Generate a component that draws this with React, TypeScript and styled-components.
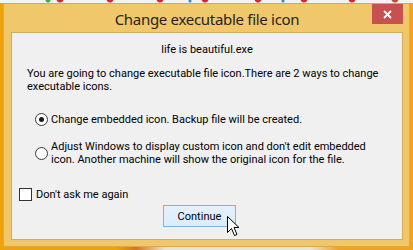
import React from "react";
import styled, { createGlobalStyle } from "styled-components";

const Global = createGlobalStyle`
  html, body { margin: 0; padding: 0; }
  body { width: 413px; height: 250px; overflow: hidden; }
`;

const Desktop = styled.div`
  width: 413px;
  height: 250px;
  box-sizing: border-box;
  padding: 3px 3px 3px 3px;
  background:
    radial-gradient(circle at 60px -1px, #d9262c 0 3px, transparent 4px),
    radial-gradient(circle at 48px 0px, #3fae3a 0 2px, transparent 3px),
    radial-gradient(circle at 110px -1px, #d9262c 0 3px, transparent 4px),
    radial-gradient(circle at 160px -1px, #d9262c 0 3px, transparent 4px),
    radial-gradient(circle at 190px 1px, #2a8be0 0 1px, transparent 2px),
    radial-gradient(circle at 205px -1px, #d9262c 0 3px, transparent 4px),
    radial-gradient(circle at 258px -1px, #d9262c 0 3px, transparent 4px),
    radial-gradient(circle at 283px 1px, #2a8be0 0 1px, transparent 2px),
    radial-gradient(circle at 304px -1px, #d9262c 0 3px, transparent 4px),
    radial-gradient(circle at 352px -1px, #d9262c 0 3px, transparent 4px),
    radial-gradient(circle at 395px -1px, #b5532a 0 3px, transparent 4px),
    linear-gradient(to bottom, #f3f3f3 0 3px, transparent 3px),
    linear-gradient(to right, #efa20a 0 28%, #d8761a 33%, #ece2d2 40%, #ebe3d6 75%, #f2a21b 82%, #f2a21b 100%);
  display: flex;
`;

const Window = styled.div`
  flex: 1;
  display: flex;
  flex-direction: column;
  background: #f0c86b;
  border: 1px solid #dca84a;
  padding: 0 6px 6px 7px;
`;

const TitleBar = styled.div`
  position: relative;
  flex: none;
  height: 28px;
  display: flex;
  align-items: center;
  justify-content: center;
`;

const Title = styled.div`
  font-family: "Noto Sans", "Open Sans", sans-serif;
  font-size: 15px;
  color: #1f1f1f;
  margin-top: 1px;
  letter-spacing: -0.3px;
`;

const CloseButton = styled.div`
  position: absolute;
  right: 0;
  top: 0;
  width: 31px;
  height: 20px;
  background: #c75050;
  display: flex;
  align-items: center;
  justify-content: center;
`;

const Client = styled.div`
  flex: 1;
  min-height: 0;
  background: #f0f0f0;
  border: 1px solid #d2ad5c;
  display: flex;
  flex-direction: column;
  font-family: Roboto, "Liberation Sans", Arial, sans-serif;
  font-size: 11px;
  color: #000;
`;

const FileName = styled.div`
  text-align: center;
  margin-top: 10px;
  line-height: 13px;
`;

const Paragraph = styled.div`
  margin: 11px 0 0 15px;
  line-height: 13px;
  width: 360px;
`;

const RadioRow = styled.div<{ $top: number }>`
  display: flex;
  align-items: center;
  gap: 3px;
  margin: ${(p) => p.$top}px 0 0 23px;
  line-height: 13px;
`;

const RadioCircle = styled.span<{ $checked?: boolean }>`
  width: 11px;
  height: 11px;
  flex: none;
  border-radius: 50%;
  border: 1px solid #3c3c3c;
  background: radial-gradient(circle, #ffffff 0 60%, #f0f0f0 100%);
  display: flex;
  align-items: center;
  justify-content: center;
  &::after {
    content: "";
    display: ${(p) => (p.$checked ? "block" : "none")};
    width: 5px;
    height: 5px;
    border-radius: 50%;
    background: #1a1a1a;
  }
`;

const RadioLabel = styled.span`
  width: 340px;
`;

const CheckRow = styled.div`
  display: flex;
  align-items: center;
  gap: 4px;
  margin: 22px 0 0 7px;
  line-height: 13px;
`;

const CheckBox = styled.span`
  width: 11px;
  height: 11px;
  border: 1px solid #333;
  background: #fff;
  flex: none;
`;

const ButtonWrap = styled.div`
  position: relative;
  margin: 4px 0 0 151px;
  width: 73px;
`;

const Button = styled.div`
  box-sizing: border-box;
  width: 73px;
  height: 22px;
  border: 1px solid #7eb4ea;
  background: linear-gradient(#e5f1fb, #dcecfc);
  display: flex;
  align-items: center;
  justify-content: center;
`;

const Cursor = styled.svg`
  position: absolute;
  left: 64px;
  top: 11px;
`;

export default function App() {
  return (
    <>
      <Global />
      <Desktop>
        <Window>
          <TitleBar>
            <Title>Change executable file icon</Title>
            <CloseButton>
              <svg width="9" height="9" viewBox="0 0 9 9">
                <path d="M1 1 L8 8 M8 1 L1 8" stroke="#fff" strokeWidth="1.8" />
              </svg>
            </CloseButton>
          </TitleBar>
          <Client>
            <FileName>life is beautiful.exe</FileName>
            <Paragraph>
              You are going to change executable file icon.There are 2 ways to change executable icons.
            </Paragraph>
            <RadioRow $top={20}>
              <RadioCircle $checked />
              <RadioLabel>Change embedded icon. Backup file will be created.</RadioLabel>
            </RadioRow>
            <RadioRow $top={14}>
              <RadioCircle />
              <RadioLabel>
                Adjust Windows to display custom icon and don't edit embedded
                <br />
                icon. Another machine will show the original icon for the file.
              </RadioLabel>
            </RadioRow>
            <CheckRow>
              <CheckBox />
              <span>Don't ask me again</span>
            </CheckRow>
            <ButtonWrap>
              <Button>Continue</Button>
              <Cursor width="13" height="21" viewBox="0 0 13 21">
                <path
                  d="M0.5 0.5 L0.5 16.5 L4.5 12.5 L7.5 19.5 L10 18.5 L7 11.5 L12 11.5 Z"
                  fill="#fff"
                  stroke="#000"
                  strokeWidth="1"
                />
              </Cursor>
            </ButtonWrap>
          </Client>
        </Window>
      </Desktop>
    </>
  );
}
